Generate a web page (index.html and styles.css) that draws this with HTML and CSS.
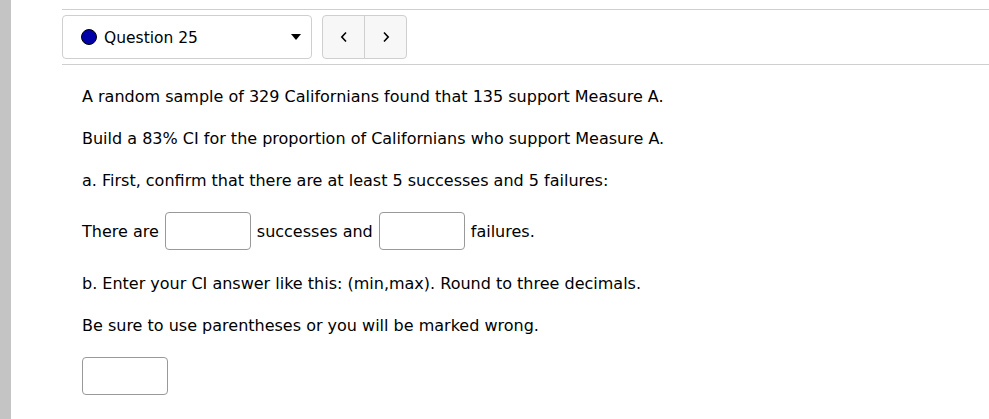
FILE: index.html
```html
<!DOCTYPE html>
<html>
<head>
<meta charset="utf-8">
<link rel="stylesheet" href="styles.css">
</head>
<body>
<div class="sidebar"></div>
<div class="main">
  <div class="qnav">
    <div class="qselect">
      <span class="dot"></span>
      <span class="qlabel">Question 25</span>
      <svg class="caret" width="10" height="7" viewBox="0 0 10 7"><polygon points="0,0 10,0 5,6" fill="#000"/></svg>
    </div>
    <div class="navbtns">
      <button class="navbtn"><svg width="8" height="12" viewBox="0 0 8 12"><polyline points="6,1.5 1.8,6 6,10.5" fill="none" stroke="#000" stroke-width="1.6"/></svg></button>
      <button class="navbtn"><svg width="8" height="12" viewBox="0 0 8 12"><polyline points="2,1.5 6.2,6 2,10.5" fill="none" stroke="#000" stroke-width="1.6"/></svg></button>
    </div>
  </div>
  <div class="question">
    <p class="para">A random sample of 329 Californians found that 135 support Measure A.</p>
    <p class="para">Build a 83% CI for the proportion of Californians who support Measure A.</p>
    <p class="para">a. First, confirm that there are at least 5 successes and 5 failures:</p>
    <div class="row">
      <span>There are</span>
      <input class="box" type="text">
      <span>successes and</span>
      <input class="box" type="text">
      <span>failures.</span>
    </div>
    <p class="para">b. Enter your CI answer like this: (min,max). Round to three decimals.</p>
    <p class="para">Be sure to use parentheses or you will be marked wrong.</p>
    <input class="box" type="text">
  </div>
</div>
</body>
</html>
```
FILE: styles.css
```css
html, body {
  margin: 0;
  padding: 0;
  background: #fff;
  height: 100%;
}
body {
  display: flex;
  font-family: "DejaVu Sans", sans-serif;
  color: #000;
}
.sidebar {
  width: 11px;
  background: #c4c4c4;
  flex: none;
}
.main {
  flex: 1;
  padding-left: 51px;
  padding-top: 9px;
}
.qnav {
  border-top: 1px solid #cfcfcf;
  border-bottom: 1px solid #cfcfcf;
  padding: 5px 0;
  display: flex;
  gap: 10px;
}
.qselect {
  height: 42px;
  border: 1px solid #cfcfcf;
  border-radius: 4px;
  display: flex;
  align-items: center;
  padding-left: 18px;
  box-sizing: content-box;
  width: 230px;
}
.dot {
  width: 14px;
  height: 14px;
  border-radius: 50%;
  background: #0000a8;
  border: 1px solid #000;
  margin-right: 7px;
}
.qlabel {
  font-size: 15.5px;
  flex: 1;
  padding-top: 1px;
}
.caret {
  margin-right: 10px;
}
.navbtns {
  display: flex;
  border: 1px solid #cfcfcf;
  border-radius: 4px;
  background: #f7f7f7;
  overflow: hidden;
}
.navbtn {
  width: 41px;
  height: 42px;
  border: none;
  background: transparent;
  padding: 0;
  display: flex;
  align-items: center;
  justify-content: center;
}
.navbtn + .navbtn {
  border-left: 1px solid #cfcfcf;
  width: 42px;
}
.question {
  padding-left: 20px;
  padding-top: 21px;
  font-size: 16px;
}
.para {
  margin: 0 0 20px;
  line-height: 22px;
}
.row {
  display: flex;
  align-items: center;
  gap: 6px;
  margin: 0 0 23px;
}
.box {
  width: 84px;
  height: 36px;
  border: 1px solid #999;
  border-radius: 4px;
  padding: 0;
  margin: 0;
  box-sizing: content-box;
  font: inherit;
}
```
